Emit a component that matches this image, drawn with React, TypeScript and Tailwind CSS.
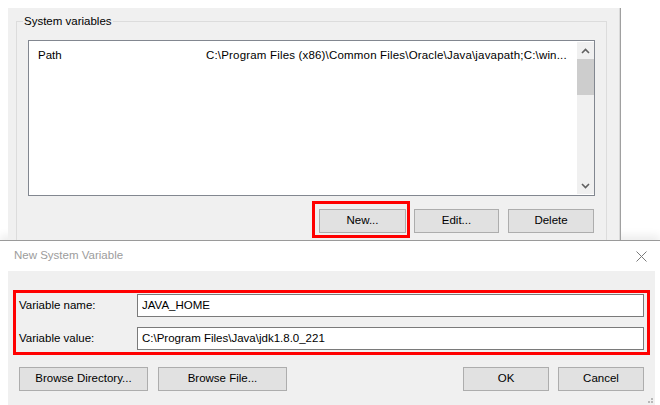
import React from "react";

function WinButton({ label, w }: { label: string; w: string }) {
  return (
    <div
      className={`${w} h-[24px] flex items-center justify-center bg-[#e1e1e1] border border-[#adadad] text-black`}
    >
      {label}
    </div>
  );
}

export default function App() {
  return (
    <div className="w-[660px] h-[405px] bg-white overflow-hidden font-['Liberation_Sans',Arial,sans-serif] text-[11.5px] text-black leading-none">
      {/* Top: Environment Variables window part */}
      <div className="h-[240px] flex pl-[8px] pt-[8px]">
        <div className="w-[611px] h-[232px] bg-[#f0f0f0] overflow-hidden pl-[8px] pt-[6px]">
          <fieldset className="w-[591px] h-[260px] border border-[#dcdcdc] px-[11px] pt-[11px]">
            <legend className="-ml-[5px] px-[1px] text-[11.5px] leading-[15px]">System variables</legend>
            <div className="w-[567px] h-[156px] border border-[#828790] bg-white flex">
              <div className="flex-1 flex pt-[9px] pl-[9px]">
                <div className="w-[168px]">Path</div>
                <div className="tracking-[0.18px]">C:\Program Files (x86)\Common Files\Oracle\Java\javapath;C:\win...</div>
              </div>
              <div className="w-[17px] my-[1px] bg-[#f0f0f0] flex flex-col items-center">
                <div className="h-[17px] flex items-center justify-center">
                  <svg width="9" height="6" viewBox="0 0 9 6">
                    <path d="M1 5 L4.5 1.5 L8 5" fill="none" stroke="#606060" strokeWidth="1.6" />
                  </svg>
                </div>
                <div className="w-[17px] h-[36px] bg-[#cdcdcd]" />
                <div className="flex-1" />
                <div className="h-[17px] flex items-center justify-center">
                  <svg width="9" height="6" viewBox="0 0 9 6">
                    <path d="M1 1 L4.5 4.5 L8 1" fill="none" stroke="#606060" strokeWidth="1.6" />
                  </svg>
                </div>
              </div>
            </div>
            <div className="flex justify-end mt-[13px] mr-[1px]">
              <div className="border-[3px] border-[#ff0000] pl-[4px] pr-[1px] pt-[5px] pb-[2px] -mt-[8px] -mb-[5px]">
                <WinButton label="New..." w="w-[87px]" />
              </div>
              <div className="w-[4px]" />
              <WinButton label="Edit..." w="w-[85px]" />
              <div className="w-[9px]" />
              <WinButton label="Delete" w="w-[86px]" />
            </div>
          </fieldset>
        </div>
        <div className="w-[1px] h-[232px] bg-[#dadada]" />
        <div className="w-[1px] h-[232px] bg-[#a0a0a0]" />
      </div>

      {/* Dialog: New System Variable */}
      <div className="border-t border-[#9a9a9a] shadow-[0_-5px_8px_rgba(0,0,0,0.07)] bg-white">
        <div className="h-[30px] flex items-center justify-between pl-[14px] pr-[13px]">
          <span className="text-[#9c9c9c] pb-[1px]">New System Variable</span>
          <svg width="11" height="11" viewBox="0 0 11 11">
            <path d="M0.5 0.5 L10.5 10.5 M10.5 0.5 L0.5 10.5" stroke="#7a7a7a" strokeWidth="1" />
          </svg>
        </div>
        <div className="ml-[8px] w-[647px] h-[134px] bg-[#f0f0f0] pt-[19px] pl-[5px] relative">
          <div className="w-[637px] h-[65px] border-[3px] border-[#ff0000] pt-[1px] pl-[3px] pr-[3px] flex flex-col gap-[10px]">
            <div className="flex items-center h-[23px]">
              <div className="w-[118px]">Variable name:</div>
              <div className="flex-1 h-[23px] border border-[#7a7a7a] bg-white flex items-center pl-[4px]">
                JAVA_HOME
              </div>
            </div>
            <div className="flex items-center h-[23px]">
              <div className="w-[118px]">Variable value:</div>
              <div className="flex-1 h-[23px] border border-[#7a7a7a] bg-white flex items-center pl-[4px]">
                C:\Program Files\Java\jdk1.8.0_221
              </div>
            </div>
          </div>
          <div className="flex mt-[12px] pl-[6px] pr-[11px]">
            <WinButton label="Browse Directory..." w="w-[129px]" />
            <div className="w-[10px]" />
            <WinButton label="Browse File..." w="w-[129px]" />
            <div className="flex-1" />
            <WinButton label="OK" w="w-[86px]" />
            <div className="w-[9px]" />
            <WinButton label="Cancel" w="w-[86px]" />
          </div>
          <div className="absolute right-[2px] bottom-[2px] flex flex-col items-end gap-[1px]">
            <div className="flex gap-[1px]"><div className="w-[2px] h-[2px] bg-[#b8b8b8]" /></div>
            <div className="flex gap-[1px]"><div className="w-[2px] h-[2px] bg-[#b8b8b8]" /><div className="w-[2px] h-[2px] bg-[#b8b8b8]" /></div>
          </div>
        </div>
      </div>
    </div>
  );
}
